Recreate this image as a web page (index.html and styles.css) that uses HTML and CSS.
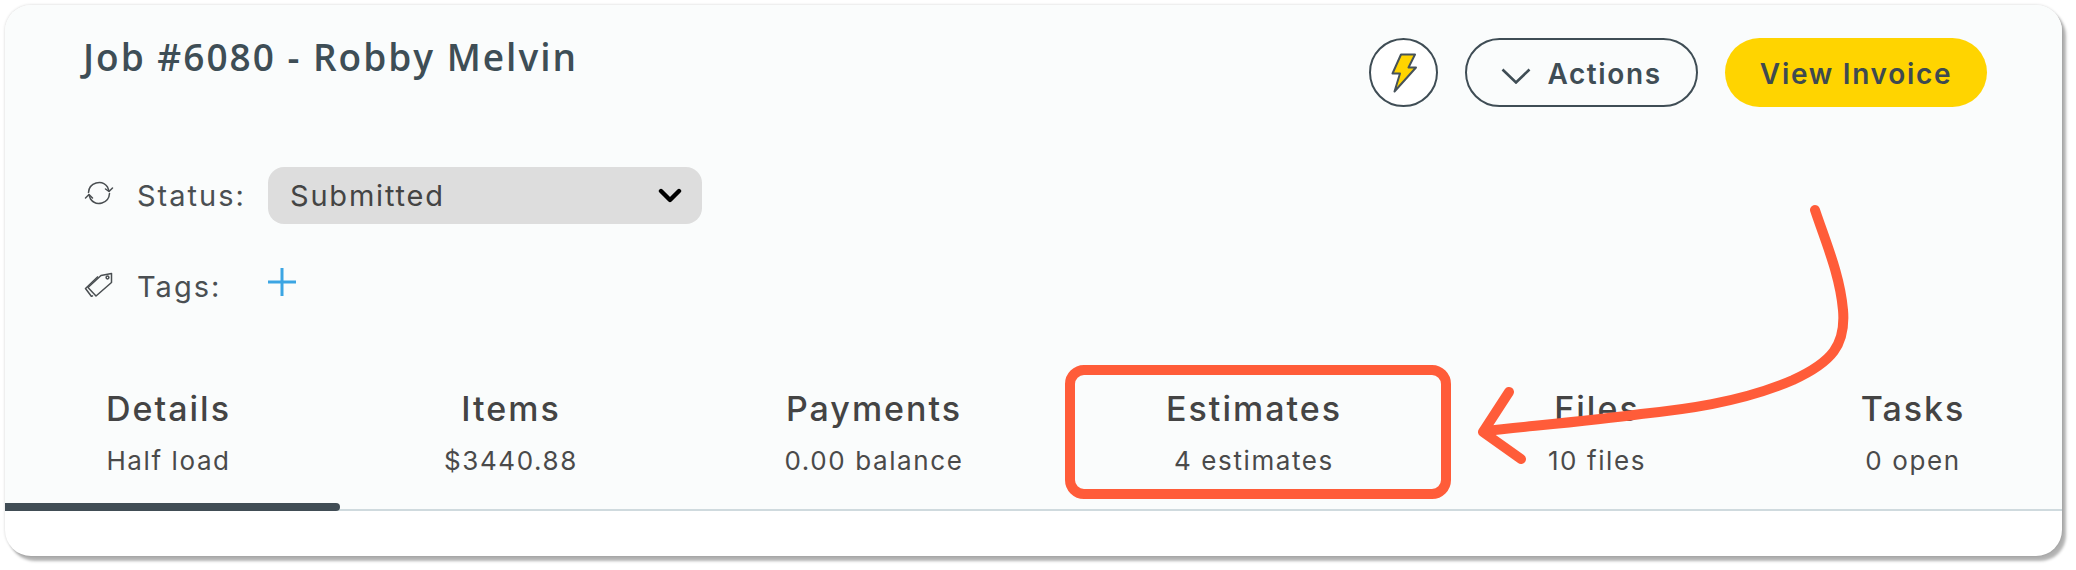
FILE: index.html
```html
<!DOCTYPE html>
<html lang="en">
<head>
<meta charset="utf-8">
<title>Job #6080</title>
<link rel="stylesheet" href="styles.css">
</head>
<body>
<main class="card">
  <section class="panel">
    <header class="head">
      <h1 class="title">Job #6080 - Robby Melvin</h1>
      <div class="actions">
        <button class="round-btn" type="button" aria-label="Quick actions">
          <svg class="bolt" viewBox="0 0 26 40" width="26" height="40"><path d="M10 1.5H24L17.5 14.5H25L3.5 38.5L9 20.5H1.5Z" fill="#ffd400" stroke="#46525a" stroke-width="2" stroke-linejoin="round"/></svg>
        </button>
        <button class="outline-btn" type="button">
          <svg viewBox="0 0 30 16" width="30" height="16"><path d="M1.5 1.5L15 14.5L28.5 1.5" fill="none" stroke="#3f4d55" stroke-width="2.6"/></svg>
          <span>Actions</span>
        </button>
        <button class="primary-btn" type="button"><span>View Invoice</span></button>
      </div>
    </header>

    <div class="field field-status">
      <svg class="field-icon" viewBox="0 0 30 26" width="30" height="26"><g fill="none" stroke="#4a4f52" stroke-width="1.5" stroke-linecap="round" stroke-linejoin="round"><path d="M4.5 12.5A10.5 10.5 0 0 1 23.5 7L25 11"/><path d="M25.5 13.5A10.5 10.5 0 0 1 6.5 19L5 15"/><path d="M21.5 9L25 11.5L28.5 8"/><path d="M1.5 18L5 14.5L8.5 18"/></g></svg>
      <span class="field-label">Status:</span>
      <div class="select"><span>Submitted</span>
        <svg viewBox="0 0 24 16" width="24" height="16"><path d="M3 3L12 12L21 3" fill="none" stroke="#000" stroke-width="4.4" stroke-linecap="round" stroke-linejoin="round"/></svg>
      </div>
    </div>

    <div class="field field-tags">
      <svg class="field-icon" viewBox="0 0 30 26" width="30" height="26"><g fill="none" stroke="#4a4f52" stroke-width="1.5" stroke-linejoin="round"><path d="M12 25L4 16.5L17 4.5L27.5 2.5L27.5 11.5Z"/><path d="M9 24.5L7.5 25.5L1.5 17.5L14 5.5"/><circle cx="23.5" cy="6.5" r="1.4"/></g></svg>
      <span class="field-label">Tags:</span>
      <svg class="plus" viewBox="0 0 28 28" width="28" height="28"><path d="M14 0V28M0 14H28" stroke="#3ba5e3" stroke-width="3"/></svg>
    </div>

    <nav class="tabs">
      <a class="tab tab-active"><strong>Details</strong><small>Half load</small></a>
      <a class="tab"><strong>Items</strong><small>$3440.88</small></a>
      <a class="tab"><strong>Payments</strong><small>0.00 balance</small></a>
      <a class="tab"><strong>Estimates</strong><small>4 estimates</small></a>
      <a class="tab"><strong>Files</strong><small>10 files</small></a>
      <a class="tab tab-last"><strong>Tasks</strong><small>0 open</small></a>
    </nav>
  </section>
</main>

<svg class="annotation" viewBox="0 0 2076 570" width="2076" height="570" aria-hidden="true">
  <g fill="none" stroke="#ff5c39" stroke-linecap="round" stroke-linejoin="round">
    <rect x="1070" y="370" width="376" height="124" rx="14" stroke-width="10"/>
    <path d="M1815 210C1826 243 1840 275 1843 310C1846 345 1832 362 1793 380C1740 403 1680 410 1641 414C1590 421 1530 426 1485 431" stroke-width="10"/>
    <path d="M1509 392L1483 432L1521 459" stroke-width="10"/>
  </g>
</svg>
</body>
</html>
```
FILE: styles.css
```css
* { box-sizing: border-box; }

html, body { margin: 0; background: #fff; }

body {
  width: 2076px;
  height: 570px;
  padding: 5px 0 0 5px;
  overflow: hidden;
  font-family: "Inter", "Liberation Sans", sans-serif;
  color: #444;
}

.card {
  width: 2057px;
  height: 551px;
  background: #fff;
  border-radius: 26px;
  overflow: hidden;
  box-shadow: 4px 5px 3px rgba(0, 0, 0, .3), 0 0 3px rgba(0, 0, 0, .18);
}

.panel {
  height: 506px;
  background: #fafcfc;
  border-bottom: 2px solid #cfdade;
  display: flex;
  flex-direction: column;
}

.head {
  display: flex;
  justify-content: space-between;
  align-items: flex-start;
  padding: 33px 75px 0 78px;
  height: 162px;
}

.title {
  margin: -1px 0 0;
  font-family: "Open Sans", sans-serif;
  font-size: 37px;
  line-height: 40px;
  font-weight: 600;
  letter-spacing: 2px;
  color: #3e4e56;
}

.actions {
  display: flex;
  align-items: center;
  gap: 27px;
}

.round-btn, .outline-btn, .primary-btn {
  height: 69px;
  padding: 0;
  font: inherit;
  display: flex;
  align-items: center;
  justify-content: center;
}

.round-btn {
  width: 69px;
  border: 2px solid #3f4d55;
  border-radius: 50%;
  background: #fff;
}

.outline-btn {
  width: 233px;
  gap: 16px;
  border: 2px solid #3f4d55;
  border-radius: 35px;
  background: transparent;
  font-size: 28px;
  font-weight: 600;
  letter-spacing: 1.6px;
  color: #3f4d55;
}

.outline-btn svg { margin-top: 6px; }

.outline-btn span, .primary-btn span { margin-top: 3px; }

.primary-btn {
  width: 262px;
  border: 0;
  border-radius: 35px;
  background: #ffd400;
  font-size: 28px;
  font-weight: 600;
  letter-spacing: 1.7px;
  color: #3e4a50;
}

.field {
  display: flex;
  align-items: center;
  padding-left: 79px;
}

.field-status { height: 57px; }

.field-status .field-icon { margin-top: -6px; }

.field-tags { height: 52px; margin-top: 32px; }

.field-tags .field-icon { margin-top: 4px; }

.field-tags .field-label { margin-top: 8px; }

.field-icon { flex: none; }

.field-label {
  width: 154px;
  padding-left: 23px;
  font-size: 29px;
  letter-spacing: 2px;
  color: #4a4f52;
}

.select {
  width: 434px;
  height: 57px;
  padding: 0 20px 0 22px;
  display: flex;
  align-items: center;
  justify-content: space-between;
  background: #ddd;
  border-radius: 16px;
  font-size: 29px;
  letter-spacing: 1.8px;
  color: #444;
}

.plus { flex: none; }

.tabs {
  margin-top: auto;
  display: grid;
  grid-template-columns: 335px 342px 384px 376px 310px 310px;
  height: 123px;
}

.tab {
  display: flex;
  flex-direction: column;
  align-items: center;
  padding-top: 3px;
  position: relative;
  margin-bottom: -2px;
}

.tab strong {
  font-size: 34px;
  line-height: 40px;
  font-weight: 500;
  letter-spacing: 2px;
  color: #444;
}

.tab small {
  margin-top: 17px;
  font-size: 26px;
  line-height: 30px;
  letter-spacing: 1.6px;
  color: #4a4a4a;
}

.tab-active { padding-right: 8px; }

.tab-active::after {
  content: "";
  position: absolute;
  left: 0;
  right: 0;
  bottom: 0;
  height: 8px;
  background: #414d55;
  border-radius: 0 4px 4px 0;
}

.tab-last { padding-left: 12px; }

.annotation {
  position: absolute;
  left: 0;
  top: 0;
  pointer-events: none;
}
```
